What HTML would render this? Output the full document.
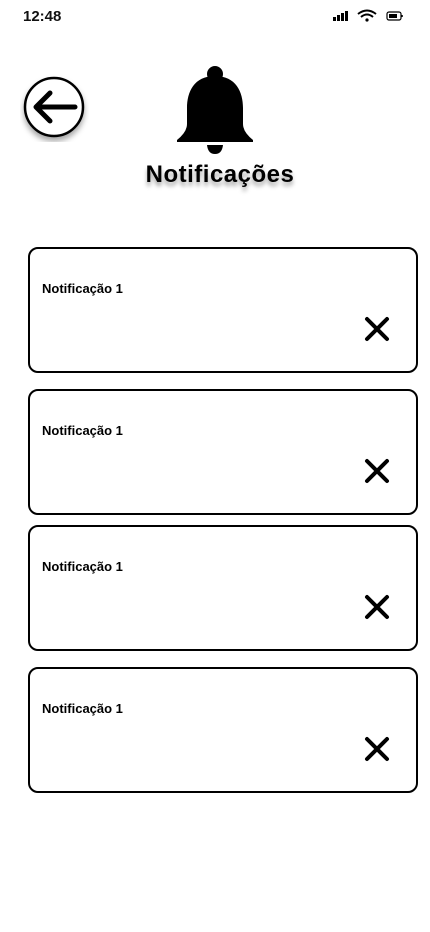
<!DOCTYPE html>
<html><head><meta charset="utf-8"><style>
*{margin:0;padding:0;box-sizing:border-box}
body{width:430px;height:932px;background:#fff;font-family:"Liberation Sans",sans-serif;position:relative;overflow:hidden}
.abs{position:absolute}
.card{position:absolute;left:28px;width:390px;height:126px;border:2px solid #000;border-radius:10px}
.card span{position:absolute;left:12px;top:32px;font-size:13px;font-weight:bold}
.card svg{position:absolute;left:333px;top:66px}
</style></head><body>
<div class="abs" style="left:23px;top:8px;font-size:15px;font-weight:bold;color:#111">12:48</div>
<svg class="abs" style="left:332px;top:9px" width="72" height="14" viewBox="0 0 72 14">
<rect x="1" y="8" width="3" height="4" fill="#000"/><rect x="5" y="6" width="3" height="6" fill="#000"/><rect x="9" y="4" width="3" height="8" fill="#000"/><rect x="13" y="2" width="3" height="10" fill="#000"/>
<path d="M26 5 Q35 -2 44 5" stroke="#000" stroke-width="2" fill="none"/><path d="M29 8 Q35 3 41 8" stroke="#000" stroke-width="2" fill="none"/><circle cx="35" cy="11" r="1.6" fill="#000"/>
<rect x="55" y="3" width="14" height="8" rx="2" stroke="#000" stroke-width="1.2" fill="none"/><rect x="57" y="5" width="8" height="4" fill="#000"/><rect x="69.5" y="6" width="1.3" height="2" fill="#000"/>
</svg>
<svg class="abs" style="left:20px;top:74px" width="70" height="72" viewBox="0 0 70 72">
<defs><filter id="s"><feDropShadow dx="0" dy="4" stdDeviation="3" flood-opacity=".35"/></filter></defs>
<circle cx="34" cy="33" r="29" fill="#fff" stroke="#000" stroke-width="2.5" filter="url(#s)"/>
<path d="M55 33 H16 M30 19 L16 33 L30 47" stroke="#000" stroke-width="5" stroke-linecap="round" stroke-linejoin="round" fill="none"/>
</svg>
<svg class="abs" style="left:176px;top:66px" width="78" height="88" viewBox="0 0 78 88">
<circle cx="39" cy="8" r="8" fill="#000"/>
<path d="M39 10 C18 10 11 26 11 42 L11 58 Q11 66 1 74 L1 76 L77 76 L77 74 Q67 66 67 58 L67 42 C67 26 60 10 39 10Z" fill="#000"/>
<path d="M31 79 H47 Q46 88 39 88 Q32 88 31 79Z" fill="#000"/>
</svg>
<div class="abs" style="left:0;width:440px;top:161px;text-align:center;font-size:24px;font-weight:bold;letter-spacing:0.5px;text-shadow:0 4px 4px rgba(0,0,0,.35)">Notificações</div>
<div class="card" style="top:247px"><span>Notificação 1</span><svg width="28" height="28" viewBox="0 0 28 28"><path d="M4 4L24 24M24 4L4 24" stroke="#000" stroke-width="4" stroke-linecap="round"/></svg></div>
<div class="card" style="top:389px"><span>Notificação 1</span><svg width="28" height="28" viewBox="0 0 28 28"><path d="M4 4L24 24M24 4L4 24" stroke="#000" stroke-width="4" stroke-linecap="round"/></svg></div>
<div class="card" style="top:525px"><span>Notificação 1</span><svg width="28" height="28" viewBox="0 0 28 28"><path d="M4 4L24 24M24 4L4 24" stroke="#000" stroke-width="4" stroke-linecap="round"/></svg></div>
<div class="card" style="top:667px"><span>Notificação 1</span><svg width="28" height="28" viewBox="0 0 28 28"><path d="M4 4L24 24M24 4L4 24" stroke="#000" stroke-width="4" stroke-linecap="round"/></svg></div>
</body></html>
